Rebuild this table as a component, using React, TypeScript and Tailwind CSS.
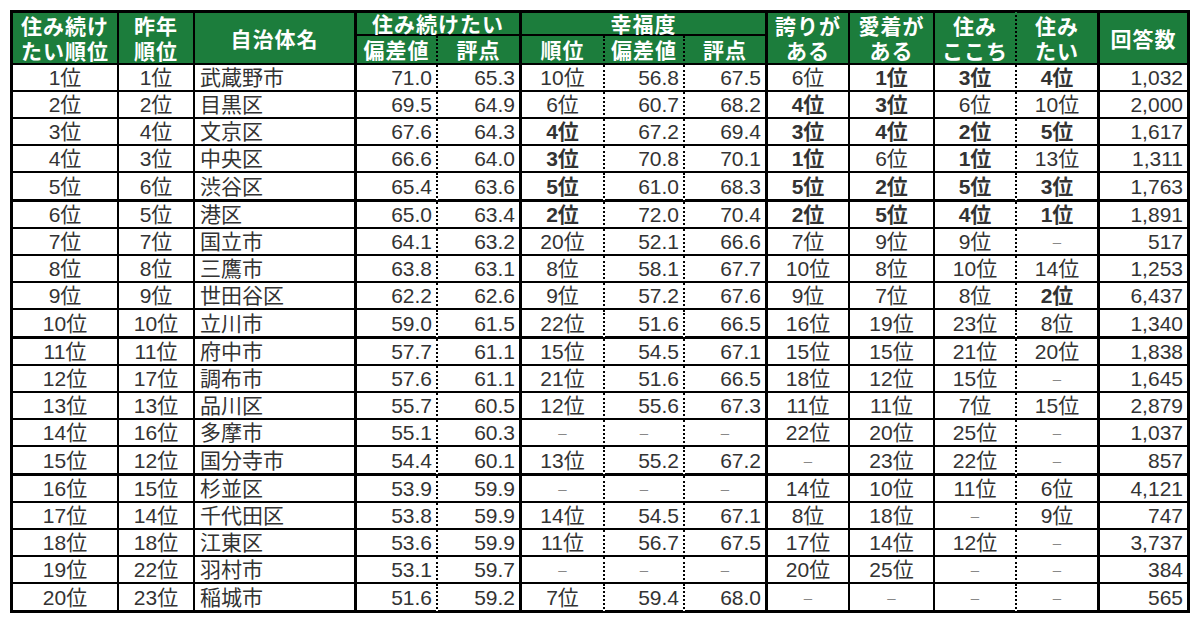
import React from "react";

type RB = "thin" | "thick" | "dash";
const rightB: RB[] = ["thin", "thin", "thick", "dash", "thick", "dash", "dash", "thick", "thin", "thin", "dash", "thick", "thick"];
const RCLS: Record<RB, string> = {
  thin: "border-r-2",
  thick: "border-r-[3px]",
  dash: "border-r-2 [border-right-style:dotted]",
};
type Al = "c" | "l" | "r";
const align: Al[] = ["c", "c", "l", "r", "r", "c", "r", "r", "c", "c", "c", "c", "r"];
const ACLS: Record<Al, string> = {
  c: "justify-center",
  l: "justify-start pl-[5px]",
  r: "justify-end pr-[4px]",
};
const boldCols = [5, 8, 9, 10, 11];

const D = "－";
const rows: string[][] = [
  ["1位", "1位", "武蔵野市", "71.0", "65.3", "10位", "56.8", "67.5", "6位", "1位", "3位", "4位", "1,032"],
  ["2位", "2位", "目黒区", "69.5", "64.9", "6位", "60.7", "68.2", "4位", "3位", "6位", "10位", "2,000"],
  ["3位", "4位", "文京区", "67.6", "64.3", "4位", "67.2", "69.4", "3位", "4位", "2位", "5位", "1,617"],
  ["4位", "3位", "中央区", "66.6", "64.0", "3位", "70.8", "70.1", "1位", "6位", "1位", "13位", "1,311"],
  ["5位", "6位", "渋谷区", "65.4", "63.6", "5位", "61.0", "68.3", "5位", "2位", "5位", "3位", "1,763"],
  ["6位", "5位", "港区", "65.0", "63.4", "2位", "72.0", "70.4", "2位", "5位", "4位", "1位", "1,891"],
  ["7位", "7位", "国立市", "64.1", "63.2", "20位", "52.1", "66.6", "7位", "9位", "9位", D, "517"],
  ["8位", "8位", "三鷹市", "63.8", "63.1", "8位", "58.1", "67.7", "10位", "8位", "10位", "14位", "1,253"],
  ["9位", "9位", "世田谷区", "62.2", "62.6", "9位", "57.2", "67.6", "9位", "7位", "8位", "2位", "6,437"],
  ["10位", "10位", "立川市", "59.0", "61.5", "22位", "51.6", "66.5", "16位", "19位", "23位", "8位", "1,340"],
  ["11位", "11位", "府中市", "57.7", "61.1", "15位", "54.5", "67.1", "15位", "15位", "21位", "20位", "1,838"],
  ["12位", "17位", "調布市", "57.6", "61.1", "21位", "51.6", "66.5", "18位", "12位", "15位", D, "1,645"],
  ["13位", "13位", "品川区", "55.7", "60.5", "12位", "55.6", "67.3", "11位", "11位", "7位", "15位", "2,879"],
  ["14位", "16位", "多摩市", "55.1", "60.3", D, D, D, "22位", "20位", "25位", D, "1,037"],
  ["15位", "12位", "国分寺市", "54.4", "60.1", "13位", "55.2", "67.2", D, "23位", "22位", D, "857"],
  ["16位", "15位", "杉並区", "53.9", "59.9", D, D, D, "14位", "10位", "11位", "6位", "4,121"],
  ["17位", "14位", "千代田区", "53.8", "59.9", "14位", "54.5", "67.1", "8位", "18位", D, "9位", "747"],
  ["18位", "18位", "江東区", "53.6", "59.9", "11位", "56.7", "67.5", "17位", "14位", "12位", D, "3,737"],
  ["19位", "22位", "羽村市", "53.1", "59.7", D, D, D, "20位", "25位", D, D, "384"],
  ["20位", "23位", "稲城市", "51.6", "59.2", "7位", "59.4", "68.0", D, D, D, D, "565"],
];

const HBASE =
  "bg-[#1c7d3c] text-white font-bold border-black flex items-center justify-center text-center text-[21px] tracking-[1px] leading-[25px] font-['Noto_Sans_CJK_JP',sans-serif]";

function HeadSpan({ col, children }: { col: number; children: React.ReactNode }) {
  return (
    <div className={`${HBASE} row-span-2 border-t-[3px] border-b-2 ${RCLS[rightB[col]]} ${col === 0 ? "border-l-[3px]" : ""}`}>
      <div>{children}</div>
    </div>
  );
}

function isBold(col: number, v: string) {
  if (!boldCols.includes(col)) return false;
  const n = parseInt(v, 10);
  return !isNaN(n) && n <= 5;
}

export default function App() {
  return (
    <div className="w-[1200px] h-[627px] bg-white pt-[10px] pl-[10px]">
      <div className="grid w-[1180px] grid-cols-[109px_76px_162px_81px_84px_83px_80px_83px_82px_85px_82px_83px_90px] grid-rows-[26px_29px]">
        <HeadSpan col={0}>
          住み続け
          <br />
          たい順位
        </HeadSpan>
        <HeadSpan col={1}>
          昨年
          <br />
          順位
        </HeadSpan>
        <HeadSpan col={2}>自治体名</HeadSpan>
        <div className={`${HBASE} col-span-2 border-t-[3px] border-b-2 ${RCLS.thick}`}>住み続けたい</div>
        <div className={`${HBASE} col-span-3 border-t-[3px] border-b-2 ${RCLS.thick}`}>幸福度</div>
        <HeadSpan col={8}>
          誇りが
          <br />
          ある
        </HeadSpan>
        <HeadSpan col={9}>
          愛着が
          <br />
          ある
        </HeadSpan>
        <HeadSpan col={10}>
          住み
          <br />
          ここち
        </HeadSpan>
        <HeadSpan col={11}>
          住み
          <br />
          たい
        </HeadSpan>
        <HeadSpan col={12}>回答数</HeadSpan>
        <div className={`${HBASE} border-b-2 ${RCLS.dash}`}>偏差値</div>
        <div className={`${HBASE} border-b-2 ${RCLS.thick}`}>評点</div>
        <div className={`${HBASE} border-b-2 ${RCLS.dash}`}>順位</div>
        <div className={`${HBASE} border-b-2 ${RCLS.dash}`}>偏差値</div>
        <div className={`${HBASE} border-b-2 ${RCLS.thick}`}>評点</div>

        {rows.map((r, ri) => {
          const thick = (ri + 1) % 5 === 0;
          return (
            <React.Fragment key={ri}>
              {r.map((v, ci) => {
                const dash = v === D;
                const bold = isBold(ci, v);
                return (
                  <div
                    key={ci}
                    className={`border-black flex items-center ${thick ? "h-[29px] border-b-[3px]" : "h-[27px] border-b-2"} ${RCLS[rightB[ci]]} ${
                      ci === 0 ? "border-l-[3px]" : ""
                    } ${dash ? "justify-center" : ACLS[align[ci]]} font-['Liberation_Sans','Noto_Sans_CJK_JP',sans-serif] leading-none whitespace-nowrap ${
                      dash ? "text-[15px] text-[#888]" : "text-[21px] text-[#333]"
                    } ${bold ? "font-bold text-[#222]" : "font-normal"}`}
                  >
                    {dash ? "–" : v}
                  </div>
                );
              })}
            </React.Fragment>
          );
        })}
      </div>
    </div>
  );
}
